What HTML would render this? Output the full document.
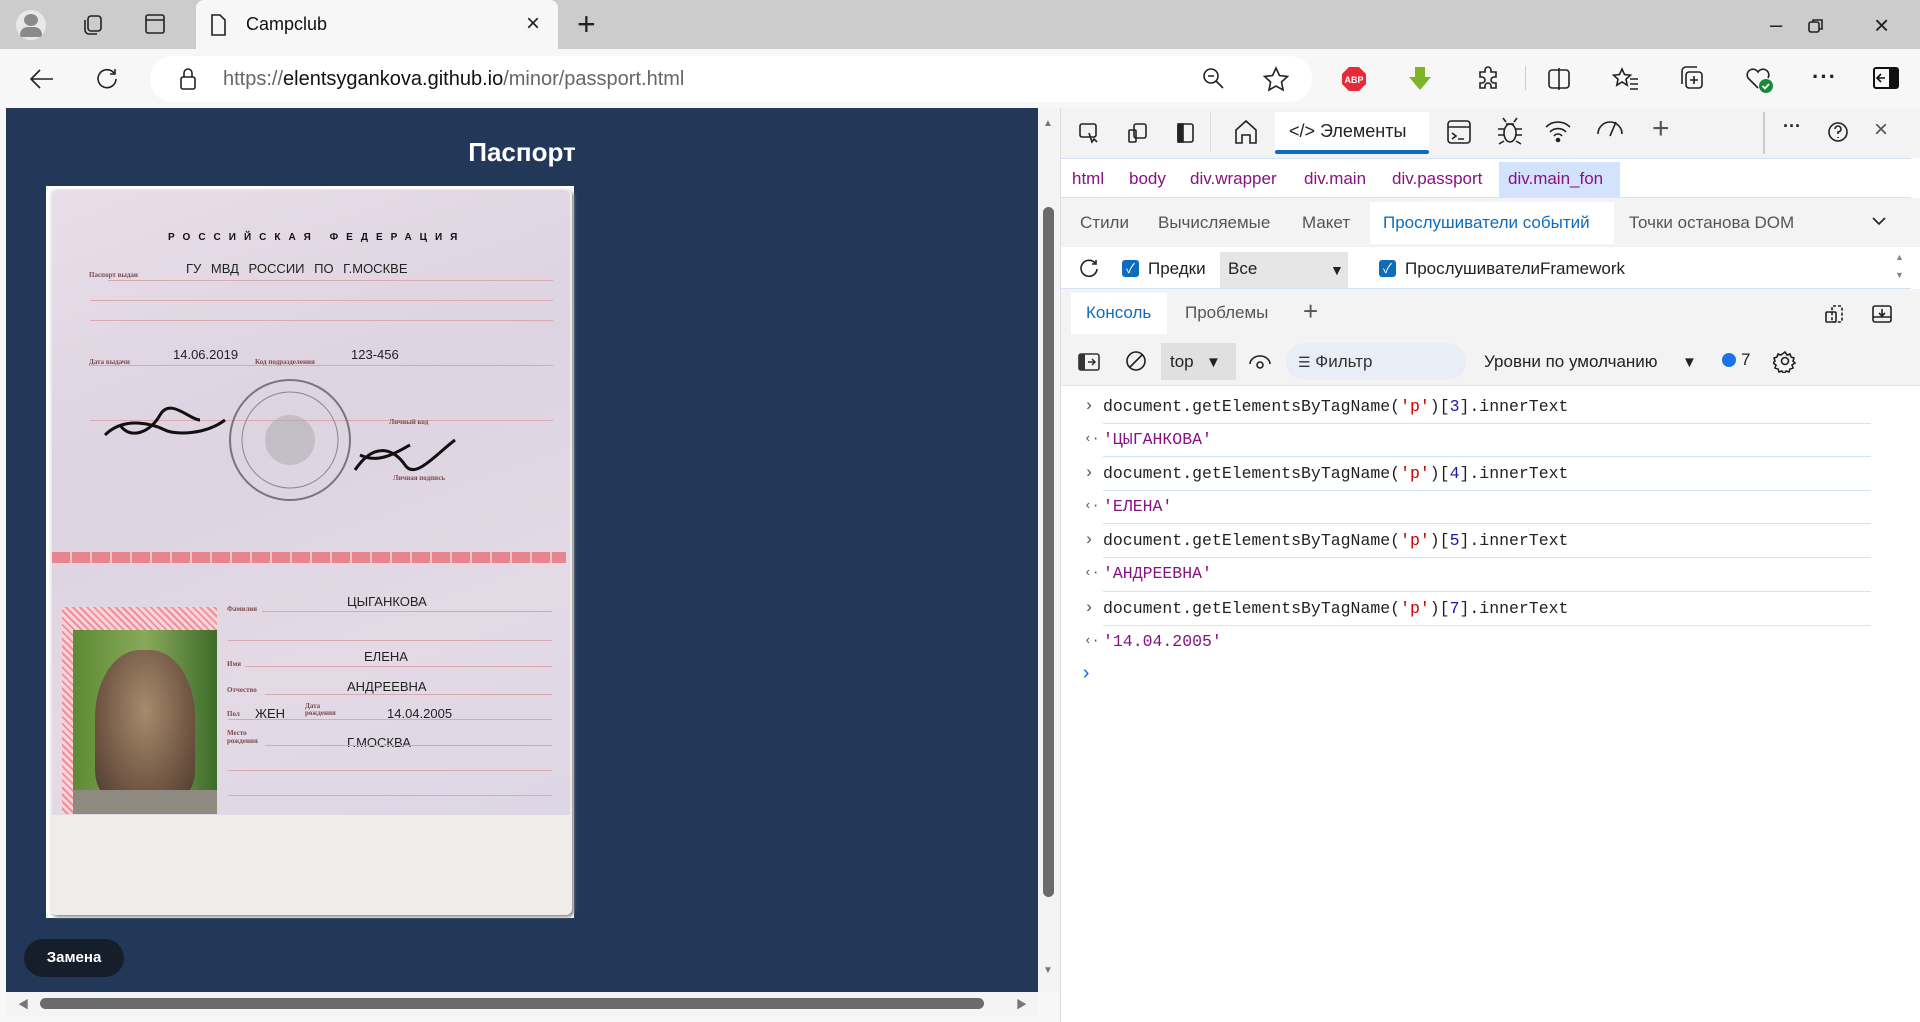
<!DOCTYPE html>
<html><head><meta charset="utf-8"><style>
*{margin:0;padding:0;box-sizing:border-box}
body{width:1920px;height:1022px;overflow:hidden;background:#f7f7f7;font-family:"Liberation Sans","Noto Sans CJK SC",sans-serif;position:relative;color:#222}
.a{position:absolute}
.ic{position:absolute;stroke:#222;fill:none;stroke-width:1.6}
.ui{font-size:17px;color:#333;white-space:nowrap}
.mono{font-family:"Liberation Mono",monospace;font-size:16.5px;white-space:nowrap;color:#222}
.sep{position:absolute;left:1103px;width:768px;height:1px;background:#d6e3f7}
.pt{position:absolute;font-size:13px;color:#222;white-space:nowrap;font-family:"Liberation Sans",sans-serif}
.lb{position:absolute;font-size:7px;color:#7a4a4a;font-weight:bold;font-family:"Liberation Serif",serif;white-space:nowrap}
.ln{position:absolute;height:1px;background:#d9a9b2}
</style></head><body>
<!-- tab bar -->
<div class="a" style="left:0;top:0;width:1920px;height:49px;background:#cccccc"></div>
<div class="a" style="left:16px;top:10px;width:30px;height:30px;border-radius:50%;background:#e8e8e8"></div>
<div class="a" style="left:24px;top:14px;width:14px;height:12px;border-radius:50%;background:#8a8a8a"></div>
<div class="a" style="left:20px;top:27px;width:22px;height:10px;border-radius:10px 10px 3px 3px;background:#8a8a8a"></div>
<svg class="ic" style="left:80px;top:12px" width="26" height="26"><rect x="8" y="4" width="13" height="15" rx="3"/><path d="M5 8v10a4 4 0 0 0 4 4h8"/></svg>
<svg class="ic" style="left:143px;top:12px" width="24" height="24"><rect x="3" y="3" width="18" height="18" rx="2"/><path d="M3 8h18"/></svg>
<div class="a" style="left:196px;top:0;width:362px;height:49px;background:#f7f7f7;border-radius:8px 8px 0 0"></div>
<svg class="ic" style="left:208px;top:13px" width="20" height="24"><path d="M4 2h8l5 5v15H4z"/></svg>
<div class="a ui" style="left:246px;top:14px;font-size:18px;color:#111">Campclub</div>
<div class="a" style="left:526px;top:10px;font-size:24px;color:#222">×</div>
<div class="a" style="left:577px;top:6px;font-size:32px;font-weight:300;color:#222">+</div>
<div class="a" style="left:1770px;top:12px;font-size:22px">–</div>
<svg class="ic" style="left:1806px;top:16px" width="20" height="20"><rect x="3" y="6" width="10" height="10" rx="2"/><path d="M7 6V4h9v9h-3"/></svg>
<div class="a" style="left:1874px;top:10px;font-size:26px">×</div>
<!-- address bar -->
<svg class="ic" style="left:28px;top:66px" width="28" height="26" stroke-width="2"><path d="M25 13H3M12 4l-9 9 9 9"/></svg>
<svg class="ic" style="left:94px;top:66px" width="26" height="26" stroke-width="2"><path d="M20 7a9 9 0 1 0 2 6M21 3v5h-5"/></svg>
<div class="a" style="left:150px;top:56px;width:1162px;height:46px;border-radius:23px;background:#fff"></div>
<svg class="ic" style="left:178px;top:66px" width="20" height="26"><rect x="3" y="11" width="14" height="12" rx="2"/><path d="M6 11V7a4 4 0 0 1 8 0v4"/></svg>
<div class="a" style="left:223px;top:68px;font-size:20px;color:#666;white-space:nowrap">https://<span style="color:#111">elentsygankova.github.io</span>/minor/passport.html</div>
<svg class="ic" style="left:1201px;top:66px" width="26" height="26"><circle cx="10" cy="10" r="7"/><path d="M15 15l7 7M7 10h6"/></svg>
<svg class="ic" style="left:1262px;top:66px" width="28" height="26"><path d="M14 2l3.5 7.5 8 1-6 5.5 1.6 8L14 20l-7 4 1.6-8-6-5.5 8-1z"/></svg>
<svg class="a" style="left:1341px;top:66px" width="26" height="26"><polygon points="8,1 18,1 25,8 25,18 18,25 8,25 1,18 1,8" fill="#e8283b"/><text x="13" y="17" font-size="9" font-weight="bold" fill="#fff" text-anchor="middle" font-family="Liberation Sans">ABP</text></svg>
<svg class="a" style="left:1407px;top:66px" width="26" height="26"><path d="M8 1h10v10h6L13 24 2 11h6z" fill="#7cb526"/></svg>
<svg class="ic" style="left:1475px;top:66px" width="26" height="26"><path d="M10 4a3 3 0 0 1 6 0v2h5v5h-2a3 3 0 0 0 0 6h2v5h-5v-2a3 3 0 0 0-6 0v2H5v-5h2a3 3 0 0 0 0-6H5V6h5z"/></svg>
<div class="a" style="left:1525px;top:66px;width:1px;height:24px;background:#ccc"></div>
<svg class="ic" style="left:1546px;top:66px" width="26" height="26"><rect x="3" y="4" width="20" height="18" rx="3"/><path d="M13 2v22"/></svg>
<svg class="ic" style="left:1612px;top:66px" width="28" height="26"><path d="M10 3l2.5 5.5 6 .7-4.5 4 1.2 6L10 16l-5.2 3.2 1.2-6-4.5-4 6-.7zM18 13h8M18 18h8M18 23h8"/></svg>
<svg class="ic" style="left:1678px;top:64px" width="28" height="28"><rect x="8" y="8" width="16" height="16" rx="3"/><path d="M4 20V7a4 4 0 0 1 4-4h11M16 12v8M12 16h8"/></svg>
<svg class="a" style="left:1744px;top:64px" width="30" height="30"><path d="M14 24L4 14a5 5 0 0 1 10-6 5 5 0 0 1 10 6" fill="none" stroke="#222" stroke-width="1.6"/><circle cx="22" cy="22" r="7" fill="#178a3a"/><path d="M18.5 22l2.5 2.5 4-4.5" stroke="#fff" stroke-width="1.8" fill="none"/></svg>
<div class="a" style="left:1812px;top:64px;font-size:22px;font-weight:bold;letter-spacing:1px">···</div>
<svg class="a" style="left:1873px;top:67px" width="26" height="22"><rect x="1" y="1" width="24" height="20" rx="2" fill="none" stroke="#111" stroke-width="2"/><rect x="16" y="1" width="9" height="20" fill="#111"/><path d="M12 11H5M8 7l-4 4 4 4" stroke="#111" stroke-width="1.6" fill="none"/></svg>
<!-- page -->
<div class="a" style="left:6px;top:108px;width:1032px;height:884px;background:#233859"></div>
<div class="a" style="left:6px;top:137px;width:1032px;text-align:center;color:#fff;font-weight:bold;font-size:26px">Паспорт</div>
<!-- passport -->
<div class="a" style="left:46px;top:186px;width:528px;height:732px;background:#fff"></div>
<div class="a" style="left:50px;top:189px;width:522px;height:726px;background:#efece9;border-radius:6px;box-shadow:2px 2px 3px #888"></div>
<div class="a" style="left:52px;top:190px;width:518px;height:625px;background:linear-gradient(160deg,#e8dde8,#ddd3e1 40%,#e4dae6 70%,#ddd6e4);border-radius:6px 6px 0 0"></div>
<div class="a" style="left:52px;top:552px;width:514px;height:11px;background:repeating-linear-gradient(90deg,#e8848f 0 18px,#f3c4c9 18px 20px)"></div>
<div class="a" style="left:168px;top:232px;font-size:10px;font-weight:bold;letter-spacing:8px;white-space:nowrap;color:#111">РОССИЙСКАЯ ФЕДЕРАЦИЯ</div>
<div class="lb" style="left:89px;top:271px">Паспорт выдан</div>
<div class="pt" style="left:186px;top:261px;word-spacing:6px">ГУ МВД РОССИИ ПО Г.МОСКВЕ</div>
<div class="ln" style="left:108px;top:280px;width:445px"></div>
<div class="ln" style="left:90px;top:300px;width:463px"></div>
<div class="ln" style="left:90px;top:320px;width:463px"></div>
<div class="lb" style="left:89px;top:358px">Дата выдачи</div>
<div class="pt" style="left:173px;top:347px">14.06.2019</div>
<div class="lb" style="left:255px;top:358px">Код подразделения</div>
<div class="pt" style="left:351px;top:347px">123-456</div>
<div class="ln" style="left:90px;top:365px;width:463px"></div>
<div class="ln" style="left:90px;top:420px;width:463px"></div>
<svg class="a" style="left:100px;top:360px" width="380" height="160"><circle cx="190" cy="80" r="60" fill="none" stroke="#777" stroke-width="2"/><circle cx="190" cy="80" r="48" fill="none" stroke="#888" stroke-width="1"/><circle cx="190" cy="80" r="25" fill="#aaa" opacity=".5"/><path d="M5 75c20-20 50-10 60-5s40 5 60-10M20 65c10 15 30 8 40-10s30 5 40 5" stroke="#111" stroke-width="3" fill="none"/><path d="M255 110c20-30 40-20 50-5s30-10 50-25M260 95c20 10 40-5 50-10" stroke="#111" stroke-width="3" fill="none"/></svg>
<div class="lb" style="left:389px;top:418px">Личный код</div>
<div class="lb" style="left:393px;top:474px">Личная подпись</div>
<!-- photo -->
<div class="a" style="left:62px;top:607px;width:155px;height:207px;background:repeating-linear-gradient(45deg,#f6d4d8 0 3px,#f08f9b 3px 5px)"></div>
<div class="a" style="left:73px;top:630px;width:144px;height:184px;background:linear-gradient(90deg,#5d8a34,#88a95a 50%,#3d6b2a)"></div>
<div class="a" style="left:95px;top:650px;width:100px;height:150px;border-radius:45% 45% 20% 20%;background:radial-gradient(ellipse at 50% 40%,#a88a6c,#6b5240 70%,#4a3a30)"></div>
<div class="a" style="left:73px;top:790px;width:144px;height:24px;background:#8f8a80"></div>
<div class="lb" style="left:227px;top:605px">Фамилия</div>
<div class="pt" style="left:347px;top:594px">ЦЫГАНКОВА</div>
<div class="ln" style="left:262px;top:611px;width:290px"></div>
<div class="ln" style="left:228px;top:640px;width:324px"></div>
<div class="lb" style="left:227px;top:660px">Имя</div>
<div class="pt" style="left:364px;top:649px">ЕЛЕНА</div>
<div class="ln" style="left:245px;top:666px;width:307px"></div>
<div class="lb" style="left:227px;top:686px">Отчество</div>
<div class="pt" style="left:347px;top:679px">АНДРЕЕВНА</div>
<div class="ln" style="left:265px;top:694px;width:287px"></div>
<div class="lb" style="left:227px;top:710px">Пол</div>
<div class="pt" style="left:255px;top:706px">ЖЕН</div>
<div class="lb" style="left:305px;top:703px;line-height:7px">Дата<br>рождения</div>
<div class="pt" style="left:387px;top:706px">14.04.2005</div>
<div class="ln" style="left:228px;top:719px;width:324px"></div>
<div class="lb" style="left:227px;top:729px;line-height:8px">Место<br>рождения</div>
<div class="pt" style="left:347px;top:735px">Г.МОСКВА</div>
<div class="ln" style="left:265px;top:745px;width:287px"></div>
<div class="ln" style="left:228px;top:770px;width:324px"></div>
<div class="ln" style="left:228px;top:795px;width:324px"></div>
<!-- button -->
<div class="a" style="left:24px;top:939px;width:100px;height:38px;border-radius:19px;background:#161e2b;color:#fff;font-weight:bold;font-size:15px;text-align:center;line-height:38px">Замена</div>
<!-- scrollbars -->
<div class="a" style="left:1038px;top:108px;width:22px;height:884px;background:#f4f4f4"></div>
<div class="a" style="left:1043px;top:118px;font-size:10px;color:#777">▲</div>
<div class="a" style="left:1043px;top:965px;font-size:10px;color:#777">▼</div>
<div class="a" style="left:1043px;top:207px;width:11px;height:690px;border-radius:6px;background:#6b6b6b"></div>
<div class="a" style="left:6px;top:992px;width:1032px;height:24px;background:#f4f4f4"></div>
<div class="a" style="left:18px;top:996px;font-size:11px;color:#777">◀</div>
<div class="a" style="left:1016px;top:996px;font-size:11px;color:#777">▶</div>
<div class="a" style="left:40px;top:998px;width:944px;height:11px;border-radius:6px;background:#6b6b6b"></div>
<!-- devtools -->
<div class="a" style="left:1060px;top:108px;width:860px;height:914px;background:#fff;border-left:1px solid #ddd"></div>
<div class="a" style="left:1061px;top:108px;width:859px;height:50px;background:#f3f3f3"></div>
<svg class="ic" style="left:1077px;top:121px" width="24" height="24"><rect x="3" y="3" width="16" height="13" rx="2"/><path d="M12 12l3 9 2-3 3 3"/></svg>
<svg class="ic" style="left:1126px;top:121px" width="24" height="24"><rect x="8" y="3" width="12" height="14" rx="2"/><rect x="3" y="9" width="7" height="12" rx="1"/></svg>
<svg class="ic" style="left:1174px;top:121px" width="24" height="24"><rect x="4" y="3" width="15" height="18" rx="2"/><rect x="4" y="3" width="5" height="18" fill="#222"/></svg>
<div class="a" style="left:1210px;top:112px;width:1px;height:40px;background:#ddd"></div>
<svg class="ic" style="left:1232px;top:118px" width="28" height="28"><path d="M4 25V12l10-9 10 9v13h-6v-8h-8v8z"/></svg>
<div class="a" style="left:1275px;top:112px;width:154px;height:42px;background:#fff"></div>
<div class="a" style="left:1275px;top:150px;width:154px;height:4px;background:#0f6cbd;border-radius:2px"></div>
<div class="a ui" style="left:1289px;top:121px;font-size:18px;color:#222">&lt;/&gt; Элементы</div>
<svg class="ic" style="left:1446px;top:118px" width="26" height="28"><rect x="2" y="3" width="22" height="22" rx="3"/><path d="M2 9h22M6 15l4 3-4 3M12 21h6"/></svg>
<svg class="ic" style="left:1496px;top:116px" width="28" height="30"><ellipse cx="14" cy="17" rx="6" ry="9"/><path d="M8 13H2M8 19H2M8 25l-5 3M20 13h6M20 19h6M20 25l5 3M10 6l-3-4M18 6l3-4M10 8h8"/></svg>
<svg class="ic" style="left:1544px;top:118px" width="28" height="26" stroke-width="2"><path d="M2 9a17 17 0 0 1 24 0M6 14a11 11 0 0 1 16 0M10 18a5 5 0 0 1 8 0"/><circle cx="14" cy="22" r="1.5" fill="#222"/></svg>
<svg class="ic" style="left:1595px;top:118px" width="30" height="26"><path d="M3 16a12 12 0 0 1 24 0M15 18l6-14"/></svg>
<div class="a" style="left:1652px;top:112px;font-size:30px;font-weight:200;color:#555">+</div>
<div class="a" style="left:1763px;top:112px;width:2px;height:42px;background:#ccc"></div>
<div class="a" style="left:1783px;top:116px;font-size:18px;font-weight:bold">···</div>
<svg class="ic" style="left:1826px;top:120px" width="24" height="24" stroke="#555"><circle cx="12" cy="12" r="9"/><path d="M9 9a3 3 0 1 1 3 3v2M12 17v1"/></svg>
<div class="a" style="left:1874px;top:116px;font-size:24px;color:#555">×</div>
<!-- breadcrumb -->
<div class="a" style="left:1061px;top:158px;width:850px;height:1px;background:#d6e3f7"></div>
<div class="a" style="left:1499px;top:162px;width:121px;height:35px;background:#d3e3fd"></div>
<div class="a ui" style="left:1072px;top:169px;color:#881280">html</div>
<div class="a ui" style="left:1129px;top:169px;color:#881280">body</div>
<div class="a ui" style="left:1190px;top:169px;color:#881280">div.wrapper</div>
<div class="a ui" style="left:1304px;top:169px;color:#881280">div.main</div>
<div class="a ui" style="left:1392px;top:169px;color:#881280">div.passport</div>
<div class="a ui" style="left:1508px;top:169px;color:#881280">div.main_fon</div>
<div class="a" style="left:1061px;top:197px;width:850px;height:1px;background:#d6e3f7"></div>
<!-- tabs -->
<div class="a" style="left:1061px;top:198px;width:859px;height:49px;background:#f3f3f3"></div>
<div class="a" style="left:1370px;top:202px;width:244px;height:42px;background:#fff"></div>
<div class="a ui" style="left:1080px;top:213px;color:#555">Стили</div>
<div class="a ui" style="left:1158px;top:213px;color:#555">Вычисляемые</div>
<div class="a ui" style="left:1302px;top:213px;color:#555">Макет</div>
<div class="a ui" style="left:1383px;top:213px;color:#0f6cbd">Прослушиватели событий</div>
<div class="a ui" style="left:1629px;top:213px;color:#555">Точки останова DOM</div>
<svg class="ic" style="left:1870px;top:214px" width="18" height="14"><path d="M3 4l6 6 6-6"/></svg>
<!-- listener row -->
<svg class="ic" style="left:1077px;top:257px" width="24" height="24"><path d="M18 6a8 8 0 1 0 2 6M19 3v4h-4"/></svg>
<div class="a" style="left:1122px;top:260px;width:17px;height:17px;border-radius:3px;background:#0f6cbd;color:#fff;font-size:13px;text-align:center;line-height:17px">✓</div>
<div class="a ui" style="left:1148px;top:259px;color:#222">Предки</div>
<div class="a" style="left:1220px;top:252px;width:128px;height:37px;background:#e6e6e6"></div>
<div class="a ui" style="left:1228px;top:259px;color:#222">Все</div>
<div class="a" style="left:1330px;top:262px;font-size:14px">▼</div>
<div class="a" style="left:1379px;top:260px;width:17px;height:17px;border-radius:3px;background:#0f6cbd;color:#fff;font-size:13px;text-align:center;line-height:17px">✓</div>
<div class="a ui" style="left:1405px;top:259px;color:#222">ПрослушивателиFramework</div>
<div class="a" style="left:1895px;top:252px;font-size:9px;color:#888">▲</div>
<div class="a" style="left:1895px;top:270px;font-size:9px;color:#888">▼</div>
<div class="a" style="left:1061px;top:288px;width:850px;height:1px;background:#d6e3f7"></div>
<!-- console tabs -->
<div class="a" style="left:1061px;top:289px;width:859px;height:49px;background:#f3f3f3"></div>
<div class="a" style="left:1071px;top:293px;width:96px;height:41px;background:#fff"></div>
<div class="a ui" style="left:1086px;top:303px;color:#0f6cbd">Консоль</div>
<div class="a ui" style="left:1185px;top:303px;color:#555">Проблемы</div>
<div class="a" style="left:1303px;top:296px;font-size:26px;font-weight:200;color:#555">+</div>
<svg class="ic" style="left:1822px;top:302px" width="24" height="24"><rect x="10" y="4" width="10" height="16" rx="1" stroke-dasharray="3 2"/><rect x="4" y="10" width="10" height="10" rx="1"/></svg>
<svg class="ic" style="left:1870px;top:302px" width="24" height="24"><rect x="3" y="4" width="18" height="16" rx="2"/><path d="M12 7v7M9 11l3 3 3-3M3 15h18"/></svg>
<div class="a" style="left:1061px;top:338px;width:859px;height:47px;background:#f3f3f3"></div>
<svg class="a" style="left:1077px;top:351px" width="24" height="22"><rect x="2" y="3" width="20" height="16" rx="2" fill="none" stroke="#333" stroke-width="1.6"/><rect x="2" y="3" width="6" height="16" fill="#333"/><path d="M11 11h7M15 8l3 3-3 3" stroke="#333" fill="none" stroke-width="1.5"/></svg>
<svg class="ic" style="left:1124px;top:349px" width="24" height="24" stroke="#444"><circle cx="12" cy="12" r="9"/><path d="M6 18L18 6"/></svg>
<div class="a" style="left:1161px;top:343px;width:75px;height:37px;background:#e0e0e0"></div>
<div class="a ui" style="left:1170px;top:352px;color:#222">top</div>
<div class="a" style="left:1206px;top:354px;font-size:15px">▼</div>
<svg class="ic" style="left:1248px;top:352px" width="24" height="20" stroke="#444"><path d="M2 12a10 8 0 0 1 20 0"/><circle cx="12" cy="13" r="3"/></svg>
<div class="a" style="left:1286px;top:343px;width:180px;height:37px;border-radius:18px;background:#e9eef6"></div>
<div class="a ui" style="left:1298px;top:352px;color:#333"><span style="font-size:14px">☰</span> Фильтр</div>
<div class="a ui" style="left:1484px;top:352px;color:#222">Уровни по умолчанию</div>
<div class="a" style="left:1682px;top:354px;font-size:15px">▼</div>
<div class="a" style="left:1722px;top:353px;width:14px;height:14px;border-radius:50%;background:#1a73e8"></div>
<div class="a ui" style="left:1741px;top:350px;color:#222">7</div>
<svg class="ic" style="left:1773px;top:349px" width="24" height="24" stroke="#444"><circle cx="12" cy="12" r="3.5"/><path d="M12 3l2 3 3-1 1 3 3 1-1 3 2 2-3 2 1 3-3 1-1 3-3-1-2 3-2-3-3 1-1-3-3-1 1-3-3-2 2-2-1-3 3-1 1-3 3 1z"/></svg>
<div class="a" style="left:1061px;top:385px;width:859px;height:1px;background:#d6e3f7"></div>
<!-- console -->
<div class="a mono" style="left:1084px;top:396px;color:#555">›</div><div class="a mono" style="left:1103px;top:397px">document.getElementsByTagName(<span style="color:#c80000">'p'</span>)[<span style="color:#1a1aa6">3</span>].innerText</div>
<div class="sep" style="top:423px"></div>
<div class="a mono" style="left:1084px;top:431px;color:#555;font-size:13px">‹·</div><div class="a mono" style="left:1103px;top:430px;color:#881280">'ЦЫГАНКОВА'</div>
<div class="sep" style="top:456px"></div>
<div class="a mono" style="left:1084px;top:463px;color:#555">›</div><div class="a mono" style="left:1103px;top:464px">document.getElementsByTagName(<span style="color:#c80000">'p'</span>)[<span style="color:#1a1aa6">4</span>].innerText</div>
<div class="sep" style="top:490px"></div>
<div class="a mono" style="left:1084px;top:498px;color:#555;font-size:13px">‹·</div><div class="a mono" style="left:1103px;top:497px;color:#881280">'ЕЛЕНА'</div>
<div class="sep" style="top:523px"></div>
<div class="a mono" style="left:1084px;top:530px;color:#555">›</div><div class="a mono" style="left:1103px;top:531px">document.getElementsByTagName(<span style="color:#c80000">'p'</span>)[<span style="color:#1a1aa6">5</span>].innerText</div>
<div class="sep" style="top:557px"></div>
<div class="a mono" style="left:1084px;top:565px;color:#555;font-size:13px">‹·</div><div class="a mono" style="left:1103px;top:564px;color:#881280">'АНДРЕЕВНА'</div>
<div class="sep" style="top:591px"></div>
<div class="a mono" style="left:1084px;top:598px;color:#555">›</div><div class="a mono" style="left:1103px;top:599px">document.getElementsByTagName(<span style="color:#c80000">'p'</span>)[<span style="color:#1a1aa6">7</span>].innerText</div>
<div class="sep" style="top:625px"></div>
<div class="a mono" style="left:1084px;top:633px;color:#555;font-size:13px">‹·</div><div class="a mono" style="left:1103px;top:632px;color:#881280">'14.04.2005'</div>
<div class="a mono" style="left:1080px;top:663px;color:#1a73e8;font-size:20px">›</div>
</body></html>
